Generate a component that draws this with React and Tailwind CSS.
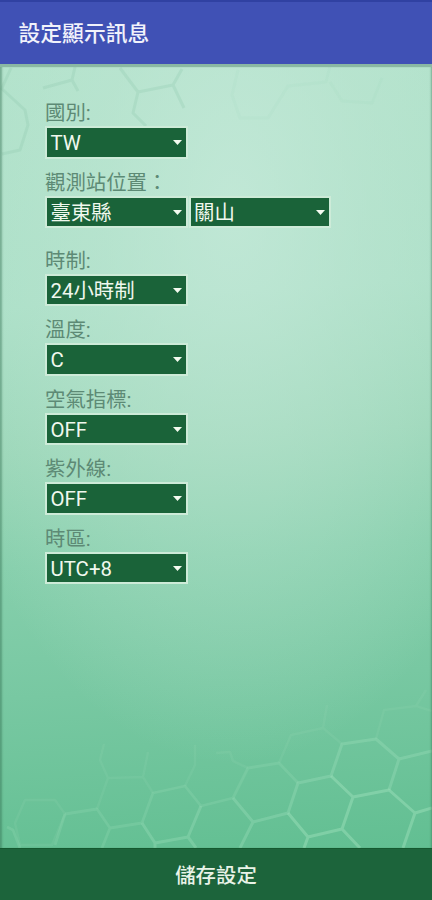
const fields = [
  { label: '國別:', values: ['TW'] },
  { label: '觀測站位置：', values: ['臺東縣', '關山'], gap: true },
  { label: '時制:', values: ['24小時制'] },
  { label: '溫度:', values: ['C'] },
  { label: '空氣指標:', values: ['OFF'] },
  { label: '紫外線:', values: ['OFF'] },
  { label: '時區:', values: ['UTC+8'] },
];

function Select({ value }) {
  return (
    <button className="flex h-[32.5px] w-[142.5px] items-center justify-between border-2 border-[#cdebd8] bg-[#1a6339] pr-[4px] pl-[3.5px] text-[20.4px] leading-none text-[#f0f8ee]">
      <span className="pt-[2px]">{value}</span>
      <svg className="mt-px h-[5px] w-[9px]" viewBox="0 0 9 5" fill="#f4fbf0">
        <path d="M0 0H9L4.5 5Z" />
      </svg>
    </button>
  );
}

function Field({ label, values, gap }) {
  return (
    <div className={gap ? 'mb-[8.5px]' : ''}>
      <div className="h-[37px] pt-[12px] text-[20.4px] leading-[25px] text-[#5d8a75]">{label}</div>
      <div className="flex gap-px">
        {values.map((v) => (
          <Select key={v} value={v} />
        ))}
      </div>
    </div>
  );
}

function Honeycomb() {
  return (
    <svg className="absolute inset-0 h-full w-full" viewBox="0 64 432 784" fill="none" strokeLinejoin="round">
      <g stroke="#8fc9ae" strokeWidth="3" opacity="0.28">
        <path d="M1 88L25 110L28 125L20 150L2 154M2 88L11 68M75 67L72 80L43 88M72 80L78 91" />
        <path d="M120 68L138 92L173 85L182 69M138 92L133 113L146 126M173 85L184 108" />
      </g>
      <g stroke="#8fcdb0" strokeWidth="3" opacity="0.08">
        <path d="M238 70L232 95L240 118L268 118L288 86L326 82L330 66M330 82L342 101L372 103L382 78" />
      </g>
      <g stroke="#a3dfbf" strokeWidth="2.5" opacity="0.12">
        <path d="M25 800L55 800L65 814L52 845H20L15 823ZM143 777L108 778L100 760L104 744M143 777L153 793M108 778L97 809M143 777L148 752M195 745V765L185 786M216 753L230 752L233 761L248 768M279 763L291 735L323 728L342 744M323 728L327 705M376 739L384 710L416 706L432 711M416 706L426 690" />
      </g>
      <g stroke="#9adfb9" strokeWidth="2.8" opacity="0.24">
        <path d="M7 827L13 830L20 848M65 814L97 809L110 828L102 848M110 828L142 823M142 823L153 793L185 786L201 806L233 798L248 768L279 763L298 783M65 814L55 845" />
      </g>
      <g stroke="#9adfb9" strokeWidth="3" opacity="0.36">
        <path d="M142 823L155 843L188 837L201 806M155 843V848M188 837L196 848M233 798L253 822L240 848M253 822L288 813L298 783L331 776L342 744L376 739L399 759L432 751M399 759L389 790" />
      </g>
      <g stroke="#9de0ba" strokeWidth="3" opacity="0.48">
        <path d="M288 813L308 837L304 848M308 837L342 829L353 797L331 776M353 797L389 790L415 813L432 808M415 813L403 848M342 829L360 848" />
      </g>
    </svg>
  );
}

export default function App() {
  return (
    <div className="flex h-[900px] w-[432px] flex-col font-['Roboto','Noto_Sans_CJK_TC',sans-serif]">
      <header className="flex h-[64px] shrink-0 items-center border-t-2 border-[#3041a2] bg-[#4051b5] pl-[18.5px]">
        <h1 className="pt-[1px] text-[21.8px] leading-none font-medium text-[#f1f2fb]">設定顯示訊息</h1>
      </header>
      <main className="relative flex-1 bg-[radial-gradient(ellipse_320px_560px_at_54%_18%,rgba(200,234,219,0.72),rgba(192,230,212,0.5)_42%,rgba(165,220,190,0)_100%),linear-gradient(176deg,#b0e2ca_0%,#a9dfc6_30%,#99d6b7_48%,#86cfac_62%,#78c8a2_78%,#62bf92_100%)]">
        <Honeycomb />
        <div className="absolute inset-0 border-t-[3px] border-t-[#8ab8a3] shadow-[inset_3px_0_2px_-1px_rgba(50,110,80,0.45),inset_-2px_0_2px_-1px_rgba(50,110,80,0.45)]" />
        <div className="relative pt-[25px] pl-[45px]">
          {fields.map((f) => (
            <Field key={f.label} {...f} />
          ))}
        </div>
      </main>
      <button className="h-[52px] shrink-0 border-t border-[#14592f] bg-[#1c643b] pt-[3px] text-[20.4px] leading-none font-medium text-[#e9f3e8]">
        儲存設定
      </button>
    </div>
  );
}
